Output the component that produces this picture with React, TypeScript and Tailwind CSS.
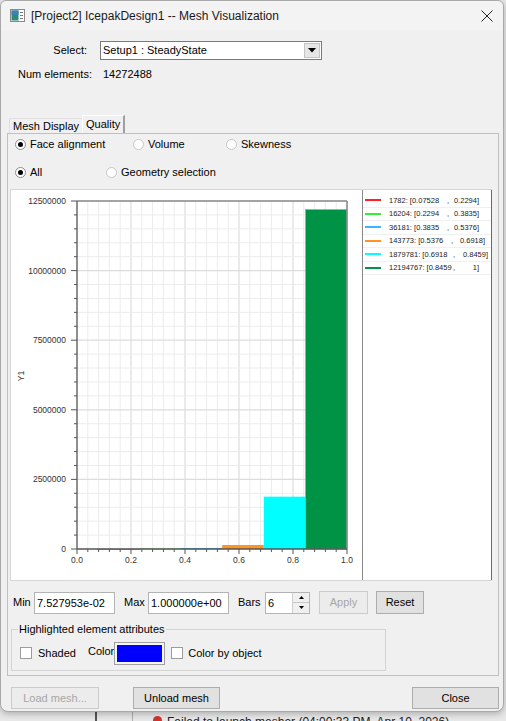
import React from 'react';

const font = { fontFamily: '"Liberation Sans", Arial, sans-serif' };

const bins = [
  { n: 1782, lo: 0.07528, hi: 0.2294, lo_s: '0.07528', hi_s: '0.2294', color: '#ff2020', cw: 'w-[58px]', mr: 'mr-[12px]' },
  { n: 16204, lo: 0.2294, hi: 0.3835, lo_s: '0.2294', hi_s: '0.3835', color: '#33ee33', cw: 'w-[58px]', mr: 'mr-[12px]' },
  { n: 36181, lo: 0.3835, hi: 0.5376, lo_s: '0.3835', hi_s: '0.5376', color: '#38b6ff', cw: 'w-[58px]', mr: 'mr-[12px]' },
  { n: 143773, lo: 0.5376, hi: 0.6918, lo_s: '0.5376', hi_s: '0.6918', color: '#ff9326', cw: 'w-[62px]', mr: 'mr-[6px]' },
  { n: 1879781, lo: 0.6918, hi: 0.8459, lo_s: '0.6918', hi_s: '0.8459', color: '#00ffff', cw: 'w-[64px]', mr: 'mr-[3px]' },
  { n: 12194767, lo: 0.8459, hi: 1, lo_s: '0.8459', hi_s: '1', color: '#009245', cw: 'w-[64px]', mr: 'mr-[12px]' },
];

const X0 = 66;
const X1 = 336;
const Y0 = 359;
const YT = 11;
const YMAX = 12500000;
const sx = (v: number) => X0 + v * (X1 - X0);
const sy = (c: number) => Y0 - (c / YMAX) * (Y0 - YT);

function Radio({ checked }: { checked?: boolean }) {
  return (
    <span className={`w-[11px] h-[11px] rounded-full border bg-white flex items-center justify-center shrink-0 ${checked ? 'border-[#8c8c8c]' : 'border-[#c6c6c6]'}`}>
      {checked && <span className="w-[5px] h-[5px] rounded-full bg-black" />}
    </span>
  );
}

function Check({ className = '' }: { className?: string }) {
  return <span className={`block w-[12px] h-[12px] border border-[#9c9c9c] bg-white shrink-0 ${className}`} />;
}

function Btn({ children, disabled, className = '' }: { children: React.ReactNode; disabled?: boolean; className?: string }) {
  return (
    <div
      className={`h-full flex items-center justify-center border ${disabled ? 'border-[#cccccc] bg-[#ececec] text-[#a6a6a6]' : 'border-[#adadad] bg-[#e1e1e1] text-black'} ${className}`}
    >
      {children}
    </div>
  );
}

function Chart() {
  const vLines = Array.from({ length: 25 }, (_, i) => i + 1);
  const hLines = Array.from({ length: 25 }, (_, i) => i + 1);
  const yTicks = Array.from({ length: 26 }, (_, i) => i);
  const xLabels = [0, 0.2, 0.4, 0.6, 0.8, 1.0];
  const yLabels = [0, 2500000, 5000000, 7500000, 10000000, 12500000];
  return (
    <svg width="351" height="390" className="block">
      {vLines.map((i) => (
        <line key={'v' + i} x1={sx(i * 0.04)} x2={sx(i * 0.04)} y1={YT} y2={Y0} stroke={i % 5 === 0 ? '#dcdcdc' : '#ececec'} strokeWidth={i % 5 === 0 ? 1.2 : 1} />
      ))}
      {hLines.map((j) => (
        <line key={'h' + j} x1={X0} x2={X1} y1={sy(j * 500000)} y2={sy(j * 500000)} stroke={j % 5 === 0 ? '#dcdcdc' : '#ececec'} strokeWidth={j % 5 === 0 ? 1.2 : 1} />
      ))}
      {bins.map((b) => (
        <rect
          key={b.n}
          x={sx(b.lo)}
          y={sy(b.n)}
          width={sx(b.hi) - sx(b.lo)}
          height={Math.max(Y0 - sy(b.n), 0.6)}
          fill={b.color}
          stroke={b.color === '#009245' ? '#6fcf97' : 'none'}
          strokeWidth={0.8}
        />
      ))}
      <line x1={X0} x2={X1} y1={YT} y2={YT} stroke="#8a8a8a" strokeWidth={1.5} />
      <line x1={X1} x2={X1} y1={YT} y2={Y0} stroke="#8a8a8a" strokeWidth={1.5} />
      <line x1={X0} x2={X0} y1={YT} y2={Y0} stroke="#6a6a6a" strokeWidth={1.5} />
      <line x1={X0} x2={X1} y1={Y0} y2={Y0} stroke="#555555" strokeWidth={1.5} />
      {yTicks.map((j) => (
        <line key={'yt' + j} x1={j % 5 === 0 ? X0 - 6 : X0 - 3} x2={X0} y1={sy(j * 500000)} y2={sy(j * 500000)} stroke="#555" strokeWidth={1} />
      ))}
      {[...vLines, 0].map((i) => (
        <line key={'xt' + i} x1={sx(i * 0.04)} x2={sx(i * 0.04)} y1={Y0} y2={i % 5 === 0 ? Y0 + 5 : Y0 + 3} stroke="#555" strokeWidth={1} />
      ))}
      {yLabels.map((c) => (
        <text key={'yl' + c} x={55} y={sy(c) + 3} textAnchor="end" fontSize="8.5" fill="#333" style={font}>
          {c}
        </text>
      ))}
      {xLabels.map((v) => (
        <text key={'xl' + v} x={sx(v)} y={Y0 + 14} textAnchor="middle" fontSize="8.5" fill="#333" style={font}>
          {v.toFixed(1)}
        </text>
      ))}
      <text x={13} y={186} transform="rotate(-90 13 186)" textAnchor="middle" fontSize="8.5" fill="#333" style={font}>
        Y1
      </text>
    </svg>
  );
}

export default function App() {
  return (
    <div className="w-[506px] h-[721px] bg-[#e8e8e8] overflow-hidden text-[11px] text-black" style={font}>
      {/* dialog */}
      <div className="relative z-10 w-[504px] h-[712px] flex flex-col bg-[#f0f0f0] border border-[#a9a9a9] rounded-b-[8px] rounded-t-[6px] shadow-[0_2px_6px_rgba(0,0,0,0.25)]">
        {/* title bar */}
        <div className="h-[29px] shrink-0 flex items-center bg-[#f3f3f3] rounded-t-[6px]">
          <svg width="15" height="13" viewBox="0 0 15 13" className="ml-[9px]">
            <rect x="0.5" y="0.5" width="14" height="12" fill="#fafafa" stroke="#8a8a8a" />
            <rect x="1.5" y="1.5" width="7" height="10" fill="#2e8b7a" />
            <rect x="1.5" y="1.5" width="7" height="4" fill="#3f7fbf" />
            <line x1="10" x2="13" y1="3.5" y2="3.5" stroke="#7a7a7a" />
            <line x1="10" x2="13" y1="6.5" y2="6.5" stroke="#7a7a7a" />
            <line x1="10" x2="13" y1="9.5" y2="9.5" stroke="#7a7a7a" />
          </svg>
          <span className="ml-[6px] text-[12px] text-[#1a1a1a]">[Project2] IcepakDesign1 -- Mesh Visualization</span>
          <svg width="12" height="12" viewBox="0 0 12 12" className="ml-auto mr-[10px]">
            <path d="M0.5 0.5 L11.5 11.5 M11.5 0.5 L0.5 11.5" stroke="#222" strokeWidth="1" />
          </svg>
        </div>

        {/* select row */}
        <div className="mt-[11px] h-[19px] flex items-center">
          <span className="w-[86px] text-right">Select:</span>
          <div className="ml-[13px] w-[222px] h-[19px] bg-white border border-[#7a7a7a] flex items-center">
            <span className="ml-[2px]">Setup1 : SteadyState</span>
            <div className="ml-auto mr-[1px] w-[16px] h-[15px] bg-[#e6e6e6] border border-[#c4c4c4] flex items-center justify-center">
              <svg width="8" height="5" viewBox="0 0 8 5">
                <path d="M0 0 L8 0 L4 4.5 Z" fill="#000" />
              </svg>
            </div>
          </div>
        </div>

        {/* num elements */}
        <div className="mt-[7px] h-[14px] flex items-center">
          <span className="pl-[17px] w-[102px]">Num elements:</span>
          <span>14272488</span>
        </div>

        {/* tabs */}
        <div className="mt-[34px] h-[18px] flex items-end pl-[8px]">
          <div className="h-[15px] px-[3px] flex items-center border-l border-t border-[#e0e0e0]">Mesh Display</div>
          <div className="h-[18px] px-[3px] flex items-center border-l border-t border-white border-r-2 border-r-[#a0a0a0] bg-[#f0f0f0]">Quality</div>
        </div>

        {/* tab panel */}
        <div className="ml-[6px] w-[492px] h-[543px] border border-[#c0c0c0] flex flex-col">
          <div className="mt-[3px] h-[14px] flex items-center pl-[7px]">
            <div className="w-[118px] flex items-center gap-[4px]">
              <Radio checked />
              <span>Face alignment</span>
            </div>
            <div className="w-[93px] flex items-center gap-[4px]">
              <Radio />
              <span>Volume</span>
            </div>
            <div className="flex items-center gap-[4px]">
              <Radio />
              <span>Skewness</span>
            </div>
          </div>
          <div className="mt-[14px] h-[14px] flex items-center pl-[7px]">
            <div className="w-[91px] flex items-center gap-[4px]">
              <Radio checked />
              <span>All</span>
            </div>
            <div className="flex items-center gap-[4px]">
              <Radio />
              <span>Geometry selection</span>
            </div>
          </div>

          {/* chart + legend */}
          <div className="mt-[10px] ml-[2px] w-[482px] h-[392px] flex border-t border-b border-l border-[#d6d6d6]">
            <div className="w-[351px] bg-white">
              <Chart />
            </div>
            <div className="w-[130px] bg-white border-l border-r border-l-[#8a8a8a] border-r-[#6a6a6a] pt-[4px] text-[7.5px] text-[#222]">
              {bins.map((b) => (
                <div key={b.n} className="h-[13.5px] flex items-center border-b border-[#f0f0f0]">
                  <span className="ml-[2px] w-[16px] h-[2px] shrink-0" style={{ backgroundColor: b.color }} />
                  <span className={`ml-[8px] ${b.cw} shrink-0 whitespace-nowrap`}>
                    {b.n}: [{b.lo_s}
                  </span>
                  <span>,</span>
                  <span className={`ml-auto ${b.mr} whitespace-nowrap`}>{b.hi_s}]</span>
                </div>
              ))}
            </div>
          </div>

          {/* min / max / bars */}
          <div className="mt-[10px] h-[23px] flex items-center pl-[5px]">
            <span className="w-[21px]">Min</span>
            <div className="w-[81px] h-[22px] bg-white border border-[#b4b4b4] pl-[2px] pt-[2px]">7.527953e-02</div>
            <span className="ml-[9px] w-[24px]">Max</span>
            <div className="w-[81px] h-[22px] bg-white border border-[#b4b4b4] pl-[2px] pt-[2px]">1.000000e+00</div>
            <span className="ml-[9px] w-[27px]">Bars</span>
            <div className="w-[45px] h-[22px] bg-white border border-[#b4b4b4] flex">
              <span className="pl-[2px] pt-[2px] flex-1">6</span>
              <div className="w-[17px] flex flex-col border-l border-[#d0d0d0]">
                <div className="flex-1 bg-[#f0f0f0] border-b border-[#c8c8c8] flex items-center justify-center">
                  <svg width="5" height="3" viewBox="0 0 5 3">
                    <path d="M0 3 L5 3 L2.5 0 Z" fill="#000" />
                  </svg>
                </div>
                <div className="flex-1 bg-[#f0f0f0] flex items-center justify-center">
                  <svg width="5" height="3" viewBox="0 0 5 3">
                    <path d="M0 0 L5 0 L2.5 3 Z" fill="#000" />
                  </svg>
                </div>
              </div>
            </div>
            <Btn disabled className="ml-[9px] w-[49px]">Apply</Btn>
            <Btn className="ml-[8px] w-[48px]">Reset</Btn>
          </div>

          {/* highlighted attributes */}
          <fieldset className="mt-[7px] ml-[3px] w-[375px] h-[50px] border border-[#d4d4d4] px-0">
            <legend className="ml-[6px] px-[1px]">Highlighted element attributes</legend>
            <div className="mt-[4px] h-[23px] flex items-center pl-[8px]">
              <Check />
              <span className="ml-[6px]">Shaded</span>
              <span className="ml-[12px] -mt-[4px]">Color</span>
              <div className="ml-0 w-[51px] h-[23px] border border-[#a0a0a0] bg-[#f4f4f4] p-[2px]">
                <div className="w-full h-full bg-[#0000ff]" />
              </div>
              <Check className="ml-[6px]" />
              <span className="ml-[5px]">Color by object</span>
            </div>
          </fieldset>
        </div>

        {/* bottom buttons */}
        <div className="mt-[11px] h-[22px] flex pl-[10px]">
          <Btn disabled className="w-[88px]">Load mesh...</Btn>
          <Btn className="ml-[34px] w-[87px]">Unload mesh</Btn>
          <Btn className="ml-auto mr-[4px] w-[87px]">Close</Btn>
        </div>
      </div>

      {/* background window peeking below */}
      <div className="h-[9px] overflow-hidden flex items-start pt-[3px] text-[12px] leading-[14px] text-[#222]">
        <span className="ml-[95px] w-[2px] h-[9px] bg-[#555] -mt-[3px]" />
        <span className="ml-[35px] w-[1px] h-[9px] bg-[#b0b0b0] -mt-[3px]" />
        <span className="ml-[20px] mt-[1px] w-[9px] h-[9px] rounded-full bg-[#d0342c]" />
        <span className="ml-[5px] whitespace-nowrap">Failed to launch mesher (04:00:33 PM, Apr 10, 2026)</span>
      </div>
    </div>
  );
}
